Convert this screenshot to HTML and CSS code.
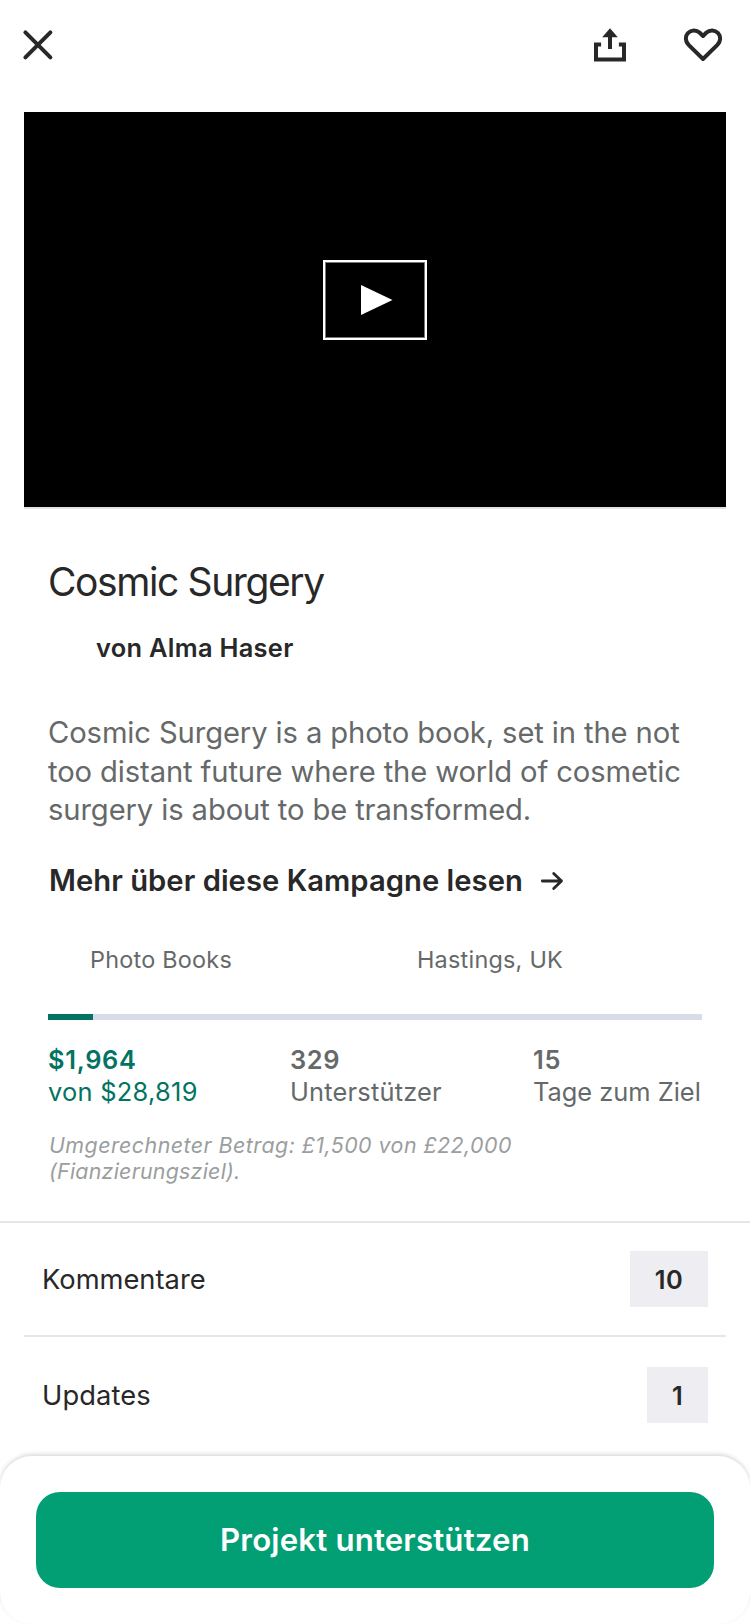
FILE: index.html
```html
<!DOCTYPE html>
<html lang="de">
<head>
<meta charset="utf-8">
<title>Cosmic Surgery</title>
<link rel="stylesheet" href="styles.css">
</head>
<body>
<div class="screen">
  <header class="topbar">
    <svg class="icon-close" width="34" height="34" viewBox="0 0 34 34"><path d="M4.400 4.400 29.400 29.400M29.400 4.400 4.400 29.400"/></svg>
    <div class="actions">
      <svg class="icon-share" width="34" height="34" viewBox="0 0 34 34"><path class="line" d="M8.100 16.600H3V31.500H31V16.600H25.900M17 21V8"/><path class="head" d="M17 .300 24.800 9.300H9.200Z"/></svg>
      <svg class="icon-heart" width="40" height="34" viewBox="0 0 40 34"><path d="M20 31 5.600 16.900C1.900 13 2.200 8 4.900 5.100 8.200 1.700 13.300 1.700 16.500 4.500L20 8 23.500 4.500C26.700 1.700 31.800 1.700 35.100 5.100 37.800 8 38.100 13 34.400 16.900Z"/></svg>
    </div>
  </header>
  <section class="video">
    <button class="play" aria-label="Video abspielen"><svg width="32" height="30" viewBox="0 0 32 30"><path d="M0 0 31.500 15 0 30Z"/></svg></button>
  </section>
  <main class="content">
    <h1 class="title">Cosmic Surgery</h1>
    <p class="author">von Alma Haser</p>
    <p class="blurb">Cosmic Surgery is a photo book, set in the not<br>too distant future where the world of cosmetic<br>surgery is about to be transformed.</p>
    <a class="more"><span>Mehr über diese Kampagne lesen</span><svg width="24" height="20" viewBox="0 0 24 20"><path d="M2.300 10H21.500M13.700 2.500 21.500 10 13.700 17.500"/></svg></a>
    <div class="meta"><span>Photo Books</span><span>Hastings, UK</span></div>
    <div class="progress"><div class="progress-fill" style="width:6.880%"></div></div>
    <div class="stats">
      <div class="stat pledged"><strong>$1,964</strong><span>von $28,819</span></div>
      <div class="stat backers"><strong>329</strong><span>Unterstützer</span></div>
      <div class="stat"><strong>15</strong><span>Tage zum Ziel</span></div>
    </div>
    <p class="converted">Umgerechneter Betrag: £1,500 von £22,000<br><span class="goal">(Fianzierungsziel).</span></p>
  </main>
  <section class="links">
    <div class="row"><span>Kommentare</span><span class="count">10</span></div>
    <hr class="divider">
    <div class="row row-updates"><span>Updates</span><span class="count count-single">1</span></div>
  </section>
  <footer class="sheet"><button class="cta">Projekt unterstützen</button></footer>
</div>
</body>
</html>
```
FILE: styles.css
```css
* { box-sizing: border-box; }
body { margin: 0; background: #fff; color: #282828; font-family: Inter, "Liberation Sans", sans-serif; }
h1, p { margin: 0; font-weight: 400; }
svg { display: block; fill: none; flex: none; }
button { border: 0; padding: 0; font-family: inherit; }
.screen { height: 1624px; display: flex; flex-direction: column; overflow: hidden; position: relative; }

.topbar { height: 112px; padding: 28px 27px 0 21px; display: flex; justify-content: space-between; }
.actions { display: flex; gap: 56px; }
.icon-close path { stroke: #282828; stroke-width: 4; stroke-linecap: round; }
.icon-share .line { stroke: #282828; stroke-width: 4; }
.icon-share .head { fill: #282828; }
.icon-heart path { stroke: #282828; stroke-width: 4; stroke-linejoin: round; }

.video { height: 397px; margin: 0 24px; background: #000; border-bottom: 2px solid #e2e2e2; display: flex; justify-content: center; padding-top: 148px; }
.play { width: 104px; height: 80px; background: #000; border: 2px solid #fff; box-shadow: inset 0 0 0 1px #777; display: flex; align-items: center; padding-left: 36px; }
.play path { fill: #fff; }

.content { padding: 49px 48px 37px; }
.title { font-size: 39px; line-height: 48px; letter-spacing: -1.400px; }
.author { margin-top: 26px; padding-left: 48px; font-size: 25.400px; line-height: 32px; font-weight: 600; letter-spacing: 0.300px; }
.blurb { margin-top: 50px; font-size: 29.200px; line-height: 38.670px; letter-spacing: -0.110px; color: #656969; white-space: nowrap; }
.more { margin-top: 33px; padding-left: 1px; display: flex; align-items: center; gap: 17px; font-size: 29.200px; line-height: 36px; font-weight: 600; letter-spacing: 0.040px; }
.more path { stroke: #282828; stroke-width: 2.800; stroke-linecap: round; stroke-linejoin: round; }
.meta { margin-top: 46px; display: grid; grid-template-columns: 327px 1fr; padding-left: 42px; font-size: 23.400px; line-height: 30px; letter-spacing: 0.240px; color: #656969; }
.progress { margin-top: 39px; height: 6px; background: #d9dce6; }
.progress-fill { height: 6px; background: #037362; }
.stats { margin-top: 24px; display: grid; grid-template-columns: 242px 243px 1fr; font-size: 25.400px; line-height: 32px; color: #656969; white-space: nowrap; }
.stat { display: flex; flex-direction: column; }
.stat strong { font-weight: 600; letter-spacing: 0.700px; }
.pledged { color: #037362; letter-spacing: 0.280px; }
.backers { letter-spacing: 0.200px; }
.converted { margin-top: 24px; padding-left: 1px; font-size: 21.400px; line-height: 26px; font-style: italic; letter-spacing: 0.460px; color: #9b9e9e; }
.goal { letter-spacing: 0.240px; }

.links { border-top: 2px solid #e6e6e6; }
.row { height: 112px; padding: 0 42px; display: flex; align-items: center; justify-content: space-between; font-size: 27.300px; }
.row-updates { height: 116px; letter-spacing: 0.100px; }
.divider { height: 2px; margin: 0 24px; border: 0; background: #e6e6e6; }
.count { width: 78px; height: 56px; display: flex; align-items: center; justify-content: center; background: #eeedf2; font-size: 25.400px; font-weight: 600; letter-spacing: 0.500px; }
.count-single { width: 61px; }

.sheet { position: absolute; left: 0; right: 0; bottom: 0; height: 168px; padding: 36px; background: #fff; border-radius: 32px; box-shadow: 0 -2px 4px rgba(0, 0, 0, 0.140); }
.cta { width: 100%; height: 96px; border-radius: 24px; background: #029e74; color: #fff; font-size: 31.200px; font-weight: 600; letter-spacing: 0.160px; }
```
